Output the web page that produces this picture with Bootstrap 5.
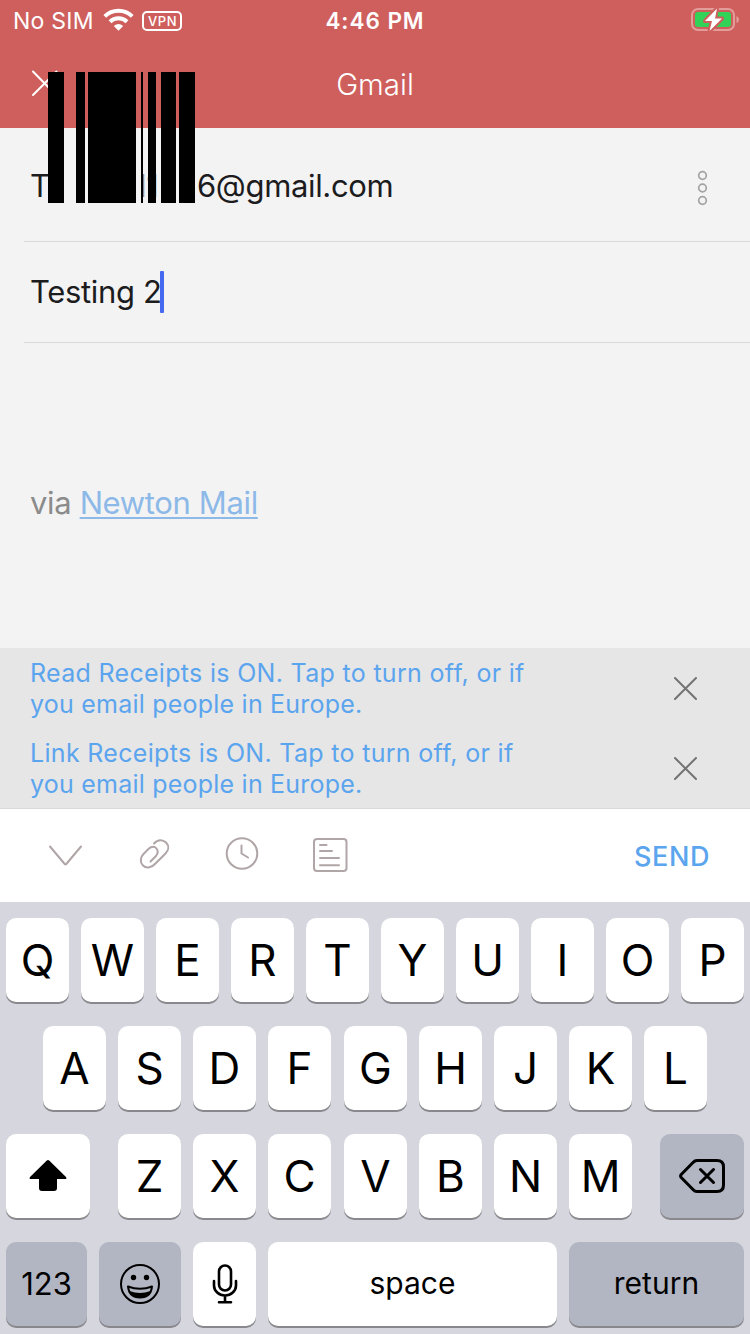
<!DOCTYPE html>
<html lang="en">
<head>
<meta charset="utf-8">
<meta name="viewport" content="width=device-width, initial-scale=1">
<title>Gmail</title>
<link rel="stylesheet" href="https://cdn.jsdelivr.net/npm/bootstrap@5.3.0/dist/css/bootstrap.min.css">
<style>
body{width:750px;height:1334px;overflow:hidden;background:#f3f3f3;font-family:Inter,"Liberation Sans",sans-serif;color:#1c1c1e}
svg{display:block;flex:none}
.app-header{height:128px;background:#ce5f5d;color:#fff}
.status-row{height:41px;font-size:23px;line-height:41px}
.carrier{margin-left:13px;padding-top:1px;letter-spacing:.25px}
.clock-text{font-weight:600;font-size:22.5px;letter-spacing:.95px}
.vpn-tag{width:40px;height:20px;border:2px solid #fff;border-radius:5px;font-size:13px;line-height:17px;font-weight:500;letter-spacing:.6px;text-align:center;padding-left:1px}
.title-row{height:87px;font-size:29.5px;line-height:87px;font-weight:300}
.field-row{margin-left:24px;padding-left:7px;border-bottom:1px solid #d9d9db;font-size:31px;letter-spacing:-.35px}
.to-row{height:114px}
.to-text{line-height:40px;padding-top:3px;white-space:nowrap;margin-left:-1px}
.to-label{width:109px}
.to-mid{width:58px;color:#8a8a8a}
.subject-row{height:101px}
.subject-text{margin-left:-1px}
.caret-bar{width:4px;height:42px;border-radius:1px;background:#456af0;margin-left:-1px}
.mail-body{height:305px;padding:140px 30px 0;font-size:31px;line-height:40px;color:#8b8b8b;letter-spacing:-.36px}
.mail-body a{color:#8db9e8;text-decoration-thickness:2px;text-underline-offset:3px;text-decoration-skip-ink:none}
.receipts{height:161px;background:#e6e6e6;border-bottom:1px solid #d9d9d9}
.receipt{height:80px;padding:1px 53px 0 30px;font-size:25px;line-height:31px;color:#5ba4ee;letter-spacing:.31px}
.receipt-end{letter-spacing:.22px}
.receipt > span{padding-top:1px}
.toolbar-row{height:93px;background:#fff;padding:0 40px 0 48px}
.send-btn{font-size:27px;font-weight:500;line-height:1;color:#5ba4ee;letter-spacing:.6px;padding-top:2px}
.keyboard{height:432px;background:#d6d6df;padding:16px 6px 0;gap:24px}
.keyrow{height:84px;gap:12px}
.key{width:63px;height:84px;border-radius:10px;background:#fff;box-shadow:0 2px 0 #89898d;color:#000;font-size:44px;line-height:84px;flex:none;display:flex;align-items:center;justify-content:center}
.key-dim{background:#b2b6c2}
.key-wide{width:84px}
.key-word{font-size:30px;padding-bottom:2px}
.key-mid{margin-right:1px}
.redaction{left:48px;top:72px;width:147px;height:131px}
.redaction i{background:#000;height:100%;flex:none}
</style>
</head>
<body>
<div class="position-relative">
<header class="app-header">
  <div class="status-row d-flex align-items-center position-relative">
    <span class="carrier">No SIM</span>
    <svg class="position-absolute" style="left:103px;top:8px" width="32" height="24" viewBox="0 0 32 24" fill="none" stroke="#fff" stroke-width="4"><path d="M1.800 8.400a19.500 19.500 0 0 1 27.400 0M7 13.800a12.200 12.200 0 0 1 17 0"/><path d="M15.500 22.800l-4.700-4.900a7.500 7.500 0 0 1 9.400 0z" fill="#fff" stroke="none"/></svg>
    <span class="vpn-tag position-absolute" style="left:142px">VPN</span>
    <span class="clock-text position-absolute start-50 translate-middle-x">4:46 PM</span>
    <svg class="position-absolute" style="left:690px;top:6px" width="52" height="28" viewBox="0 0 52 28"><rect x="2" y="3" width="42" height="21" rx="6" fill="none" stroke="#e29d9b" stroke-width="2"/><rect x="5" y="6" width="36" height="15" rx="3" fill="#32d158"/><path d="M46.500 10v7q2.500-1 2.500-3.500t-2.500-3.500z" fill="#e29d9b"/><path d="M27 2.500L15 15h7L19.500 25 32 12.500h-7z" fill="#fff" stroke="#ce5f5d" stroke-width="4" stroke-linejoin="round"/><path d="M27 2.500L15 15h7L19.500 25 32 12.500h-7z" fill="#fff"/></svg>
  </div>
  <div class="title-row text-center position-relative">
    <svg class="position-absolute" style="left:31px;top:29px" width="28" height="28" viewBox="0 0 28 28" stroke="#fff" stroke-width="2" stroke-linecap="round"><path d="M2 1.500l23 23.500M2 25L25.500 1.500"/></svg>
    <span>Gmail</span>
  </div>
</header>
<section class="field-row to-row d-flex align-items-center">
  <div class="to-text d-flex"><span class="to-label">T</span><span class="to-mid">l1</span><span>6@gmail.com</span></div>
  <svg class="ms-auto me-5" style="transform:translate(6.500px,3px)" width="12" height="36" viewBox="0 0 12 36" fill="none" stroke="#a3a3a3" stroke-width="1.700"><circle cx="6" cy="5.500" r="3.800"/><circle cx="6" cy="18" r="3.800"/><circle cx="6" cy="30.500" r="3.800"/></svg>
</section>
<section class="field-row subject-row d-flex align-items-center">
  <span class="subject-text">Testing 2</span><span class="caret-bar"></span>
</section>
<section class="mail-body">via <a href="#">Newton Mail</a></section>
<section class="receipts">
  <div class="receipt d-flex align-items-center justify-content-between"><span>Read Receipts is ON. Tap to turn off, or if<br><span class="receipt-end">you email people in Europe.</span></span>
    <svg width="23" height="23" viewBox="0 0 23 23" stroke="#737373" stroke-width="2" stroke-linecap="round"><path d="M1 1l21 21M1 22L22 1"/></svg></div>
  <div class="receipt d-flex align-items-center justify-content-between"><span>Link Receipts is ON. Tap to turn off, or if<br><span class="receipt-end">you email people in Europe.</span></span>
    <svg width="23" height="23" viewBox="0 0 23 23" stroke="#737373" stroke-width="2" stroke-linecap="round"><path d="M1 1l21 21M1 22L22 1"/></svg></div>
</section>
<section class="toolbar-row d-flex align-items-center">
  <svg width="300" height="40" viewBox="48 836 300 40" fill="none" stroke="#b0a5a7" stroke-width="2" stroke-linecap="round" stroke-linejoin="round">
    <path d="M50 846.500l14.700 17.500q.8.900 1.600 0L81 846.500"/>
    <path d="M154 843.500C158 839 163 839.500 166 842.500C169.500 846 168.500 850.500 165.500 853.500L155.500 863.500C151 868.500 146 868.500 143 865.500C139.500 862 140.500 857 143.500 854L149 848.500C151.500 846 154.500 846 156.500 848.500C158.500 851 158 853.500 156 856L150.500 861.500"/>
    <circle cx="242" cy="853.500" r="15.300"/><path d="M241.500 845.500v8l6.500 4"/>
    <rect x="314" y="839" width="32.500" height="32" rx="3"/><path d="M320 845h6.500M320 851h12M320 858h19M320 865.300h19"/>
  </svg>
  <span class="send-btn ms-auto">SEND</span>
</section>
<section class="keyboard d-flex flex-column">
  <div class="keyrow d-flex justify-content-center"><span class="key">Q</span><span class="key">W</span><span class="key">E</span><span class="key">R</span><span class="key">T</span><span class="key">Y</span><span class="key">U</span><span class="key">I</span><span class="key">O</span><span class="key">P</span></div>
  <div class="keyrow d-flex justify-content-center"><span class="key">A</span><span class="key">S</span><span class="key">D</span><span class="key key-mid">F</span><span class="key">G</span><span class="key">H</span><span class="key">J</span><span class="key">K</span><span class="key">L</span></div>
  <div class="keyrow d-flex justify-content-between">
    <span class="key key-wide"><svg width="38" height="34" viewBox="0 0 38 34"><path d="M17.800 1.600q1.200-1.200 2.400 0L37 18q1.200 2-1 2H28v9q0 3-3 3H13q-3 0-3-3v-9H2q-2.200 0-1-2z"/></svg></span>
    <div class="keyrow d-flex"><span class="key">Z</span><span class="key">X</span><span class="key key-mid">C</span><span class="key">V</span><span class="key">B</span><span class="key">N</span><span class="key">M</span></div>
    <span class="key key-dim key-wide"><svg width="46" height="34" viewBox="0 0 46 34" fill="none" stroke="#000" stroke-width="3" stroke-linecap="round" stroke-linejoin="round"><path d="M18 1.500h20q6.500 0 6.500 6.500v18q0 6.500-6.500 6.500H18q-2.200 0-4-2L2.200 18.500q-1.200-1.500 0-3L14 3.500q1.800-2 4-2zM21.500 10.500l13 13M21.500 23.500l13-13"/></svg></span>
  </div>
  <div class="keyrow d-flex">
    <span class="key key-dim" style="width:81px;font-size:31px">123</span>
    <span class="key key-dim" style="width:82px"><svg width="42" height="42" viewBox="0 0 42 42"><circle cx="21" cy="21" r="19" fill="none" stroke="#000" stroke-width="2"/><circle cx="14.500" cy="14.500" r="2.700"/><circle cx="27.500" cy="14.500" r="2.700"/><path d="M9 23.500q12 4.500 24 0-1 11-12 11T9 23.500z" fill="none" stroke="#000" stroke-width="2" stroke-linejoin="round"/><path d="M10.500 28q10.500 4 21 0-2.500 6.500-10.500 6.500T10.500 28z"/></svg></span>
    <span class="key"><svg width="26" height="40" viewBox="0 0 26 40" fill="none" stroke="#000" stroke-width="2.600" stroke-linecap="round"><rect x="7" y="1.500" width="12" height="25" rx="6"/><path d="M2 17v4.500a11 10 0 0 0 22 0V17M13 32v6M7 38.300h12"/></svg></span>
    <span class="key key-word" style="width:289px">space</span>
    <span class="key key-word key-dim" style="width:175px">return</span>
  </div>
</section>
<div class="redaction position-absolute d-flex" aria-hidden="true">
  <i style="width:16px"></i><i style="width:9px;margin-left:12px"></i><i style="width:48px;margin-left:3px"></i><i style="width:2px;margin-left:5px"></i><i style="width:8px;margin-left:5px"></i><i style="width:15px;margin-left:5px"></i><i style="width:16px;margin-left:3px"></i>
</div>
</div>
<script src="https://cdn.jsdelivr.net/npm/bootstrap@5.3.0/dist/js/bootstrap.bundle.min.js"></script>
</body>
</html>
